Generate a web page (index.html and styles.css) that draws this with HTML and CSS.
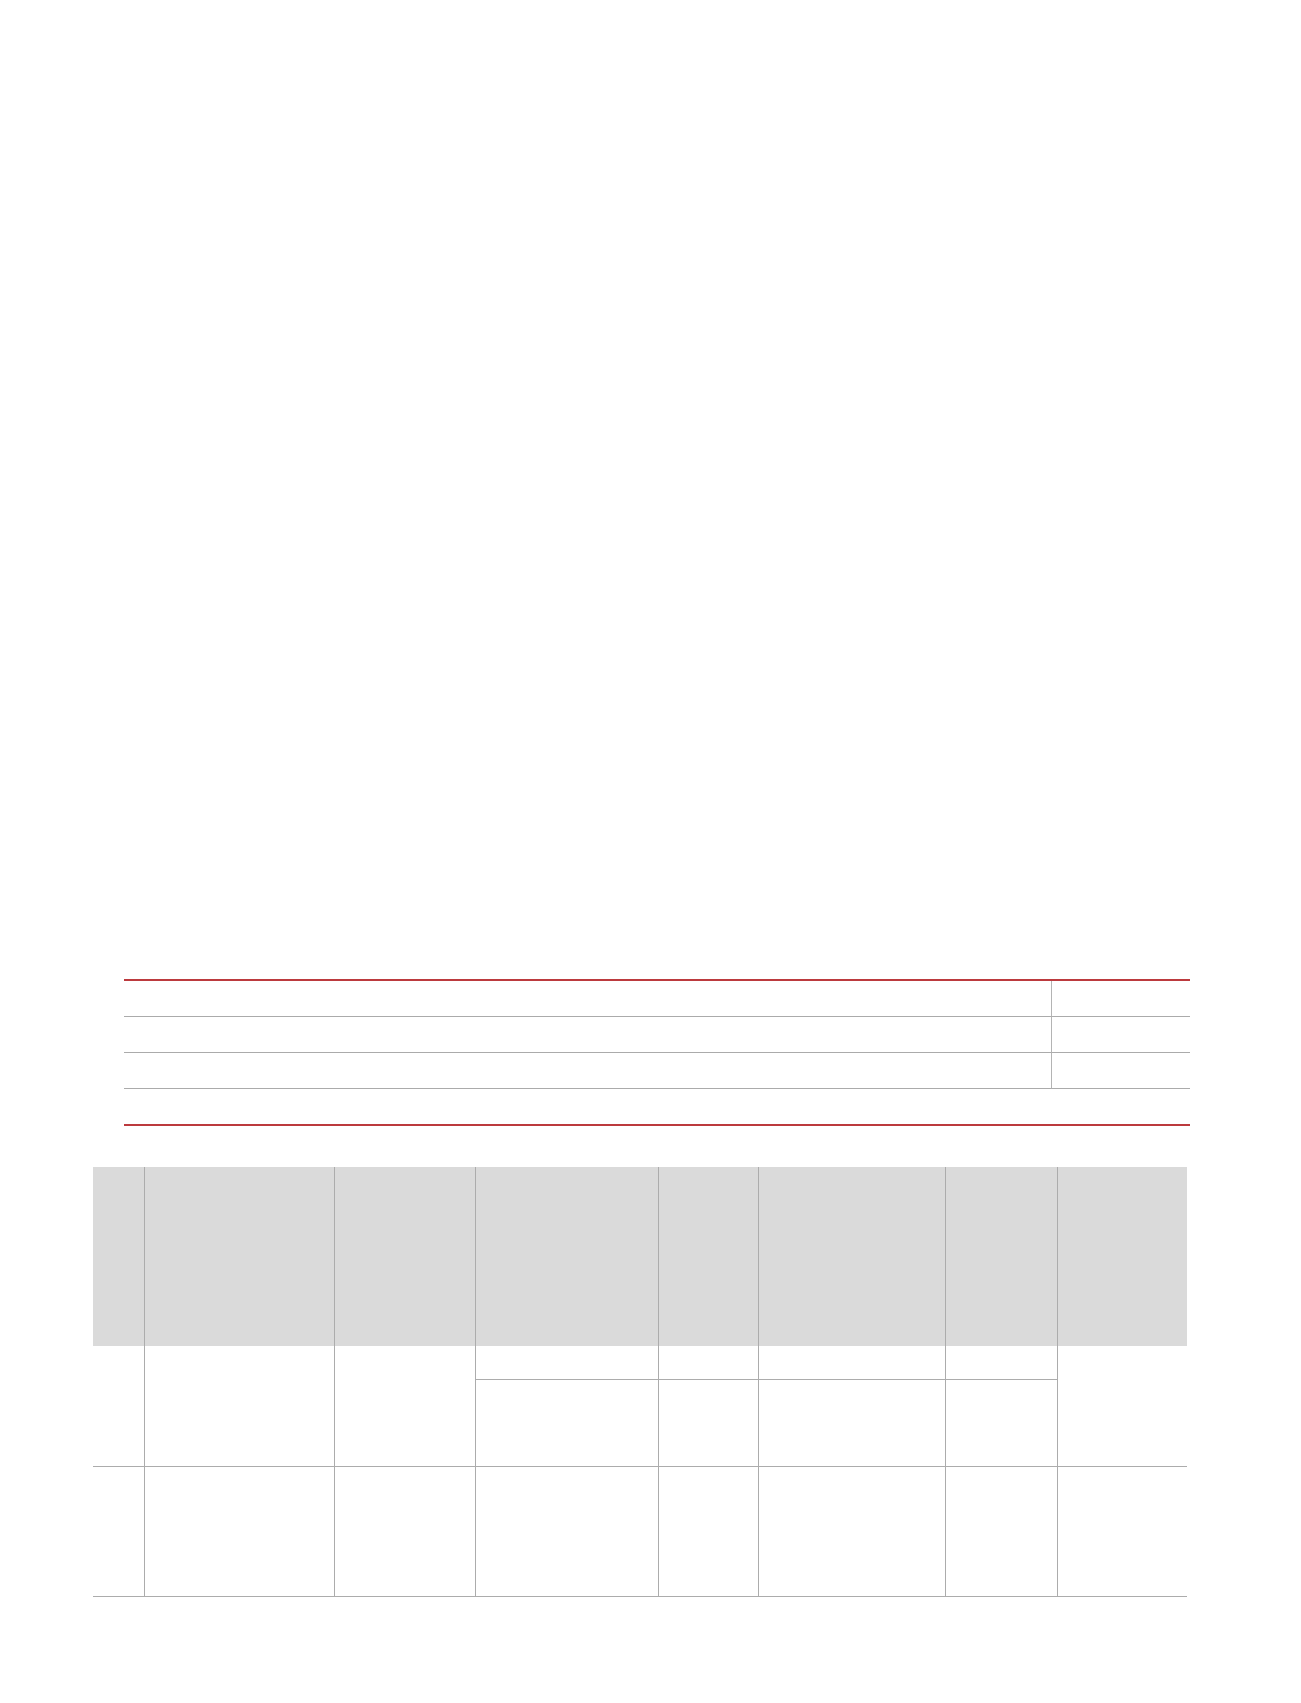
FILE: index.html
```html
<!DOCTYPE html>
<html lang="en">
<head>
<meta charset="utf-8">
<title>Table</title>
<link rel="stylesheet" href="styles.css">
</head>
<body>
<main class="page">
  <table class="summary">
    <colgroup>
      <col class="c-main">
      <col class="c-side">
    </colgroup>
    <tbody>
      <tr class="s-row"><td class="s-main"></td><td class="s-side"></td></tr>
      <tr class="s-row"><td class="s-main"></td><td class="s-side"></td></tr>
      <tr class="s-row"><td class="s-main"></td><td class="s-side"></td></tr>
      <tr class="s-last"><td class="s-full" colspan="2"></td></tr>
    </tbody>
  </table>

  <table class="grid">
    <colgroup>
      <col class="g1"><col class="g2"><col class="g3"><col class="g4">
      <col class="g5"><col class="g6"><col class="g7"><col class="g8">
    </colgroup>
    <thead>
      <tr class="head">
        <th class="first"></th><th></th><th></th><th></th><th></th><th></th><th></th><th></th>
      </tr>
    </thead>
    <tbody>
      <tr class="r1a">
        <td class="first span" rowspan="2"></td>
        <td class="span" rowspan="2"></td>
        <td class="span" rowspan="2"></td>
        <td class="sub"></td>
        <td class="sub"></td>
        <td class="sub"></td>
        <td class="sub"></td>
        <td class="span" rowspan="2"></td>
      </tr>
      <tr class="r1b">
        <td></td><td></td><td></td><td></td>
      </tr>
      <tr class="r2">
        <td class="first"></td><td></td><td></td><td></td><td></td><td></td><td></td><td></td>
      </tr>
    </tbody>
  </table>
</main>
</body>
</html>
```

FILE: styles.css
```css
* { box-sizing: border-box; }

html, body {
  margin: 0;
  padding: 0;
  background: #ffffff;
  font-family: "Liberation Sans", Arial, sans-serif;
}

.page {
  padding-top: 979px;
}

/* ---------- summary table ---------- */
.summary {
  margin-left: 124px;
  width: 1066px;
  table-layout: fixed;
  border-collapse: separate;
  border-spacing: 0;
  border-top: 2px solid #bc3a3e;
  border-bottom: 2px solid #bc3a3e;
}

.summary .c-main { width: 927px; }
.summary .c-side { width: 139px; }

.summary td {
  padding: 0;
}

.s-row { height: 36px; }
.s-row td { border-bottom: 1px solid #ababab; }
.s-side { border-left: 1px solid #b4b4b4; }
.s-last { height: 35px; }

/* ---------- grid table ---------- */
.grid {
  margin: 41px 0 0 93px;
  width: 1094px;
  table-layout: fixed;
  border-collapse: separate;
  border-spacing: 0;
}

.g1 { width: 51px; }
.g2 { width: 190px; }
.g3 { width: 141px; }
.g4 { width: 183px; }
.g5 { width: 100px; }
.g6 { width: 187px; }
.g7 { width: 112px; }
.g8 { width: 130px; }

.grid th,
.grid td {
  padding: 0;
  border-left: 1px solid #acacac;
}

.grid th.first,
.grid td.first {
  border-left: none;
}

.head { height: 179px; }
.head th { background: #dadada; }

.r1a { height: 34px; }
.r1b { height: 87px; }
.r2 { height: 130px; }

.grid td.sub,
.grid td.span,
.r1b td,
.r2 td {
  border-bottom: 1px solid #acacac;
}
```
